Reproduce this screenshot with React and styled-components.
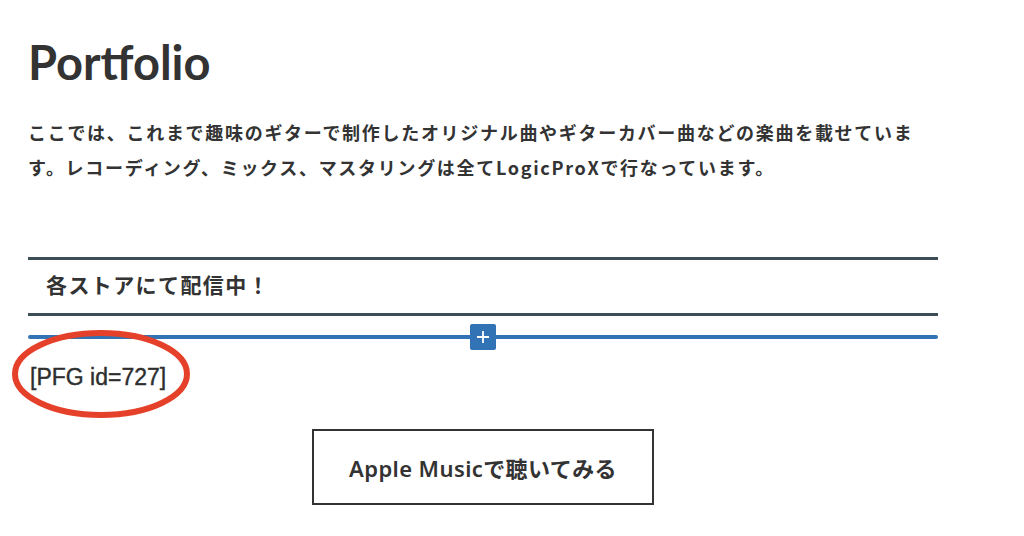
import React from 'react'
import styled, { createGlobalStyle } from 'styled-components'

const GlobalStyle = createGlobalStyle`
  body {
    margin: 0;
    background: #fff;
    color: #333;
    font-family: "Noto Sans CJK JP", "Noto Sans", sans-serif;
  }
`

const Page = styled.main`
  width: 910px;
  padding: 30px 0 0 28px;
`

const Title = styled.h1`
  margin: 0;
  font-family: Lato, "Noto Sans", sans-serif;
  font-size: 47px;
  font-weight: 700;
  line-height: 64px;
  color: #333;
`

const Lead = styled.p`
  margin: 21px 0 0;
  font-size: 18px;
  font-weight: 700;
  letter-spacing: 1.7px;
  line-height: 35px;
`

const StoreHeading = styled.h2`
  margin: 72px 0 0;
  padding: 0 18px 6px;
  box-sizing: border-box;
  height: 59px;
  display: flex;
  align-items: center;
  border-top: 3px solid #3b4d55;
  border-bottom: 3px solid #3b4d55;
  font-size: 21px;
  font-weight: 700;
  letter-spacing: 1.4px;
`

const Inserter = styled.div`
  position: relative;
  height: 26px;
  margin-top: 8px;
  display: flex;
  justify-content: center;
  align-items: center;

  &::before {
    content: '';
    position: absolute;
    left: 0;
    right: 0;
    top: 11px;
    height: 4px;
    border-radius: 2px;
    background: #3273b5;
  }
`

const PlusButton = styled.button`
  position: relative;
  width: 26px;
  height: 26px;
  padding: 0;
  border: none;
  border-radius: 2px;
  background: #3273b5;
  color: #fff;
  display: flex;
  align-items: center;
  justify-content: center;
`

const ShortcodeRow = styled.div`
  position: relative;
  margin-top: 1px;
  height: 52px;
  display: flex;
  align-items: center;
`

const Shortcode = styled.span`
  margin-left: 2px;
  font-family: "Liberation Sans", Arial, sans-serif;
  font-size: 23px;
  color: #2e2e2e;
  -webkit-text-stroke: 0.4px #2e2e2e;
`

const Circle = styled.svg`
  position: absolute;
  left: -28px;
  top: -22px;
  overflow: visible;
`

const ButtonRow = styled.div`
  display: flex;
  justify-content: center;
  margin-top: 26px;
`

const ListenButton = styled.a`
  box-sizing: border-box;
  width: 342px;
  height: 76px;
  display: flex;
  align-items: center;
  justify-content: center;
  border: 2px solid #333;
  font-family: "Noto Sans", "Noto Sans CJK JP", sans-serif;
  font-size: 22px;
  font-weight: 600;
  letter-spacing: 0.4px;
  color: #333;
  text-decoration: none;
`

export default function App() {
  return (
    <>
      <GlobalStyle />
      <Page>
        <Title>Portfolio</Title>
        <Lead>
          ここでは、これまで趣味のギターで制作したオリジナル曲やギターカバー曲などの楽曲を載せています。レコーディング、ミックス、マスタリングは全てLogicProXで行なっています。
        </Lead>
        <StoreHeading>各ストアにて配信中！</StoreHeading>
        <Inserter>
          <PlusButton aria-label="ブロックを追加">
            <svg width="16" height="16" viewBox="0 0 16 16">
              <path d="M8 2v12M2 8h12" stroke="#fff" strokeWidth="1.8" />
            </svg>
          </PlusButton>
        </Inserter>
        <ShortcodeRow>
          <Shortcode>[PFG id=727]</Shortcode>
          <Circle width="180" height="90">
            <ellipse cx="101" cy="45" rx="86" ry="41" fill="none" stroke="#e5412a" strokeWidth="6" />
          </Circle>
        </ShortcodeRow>
        <ButtonRow>
          <ListenButton href="#">Apple Musicで聴いてみる</ListenButton>
        </ButtonRow>
      </Page>
    </>
  )
}
